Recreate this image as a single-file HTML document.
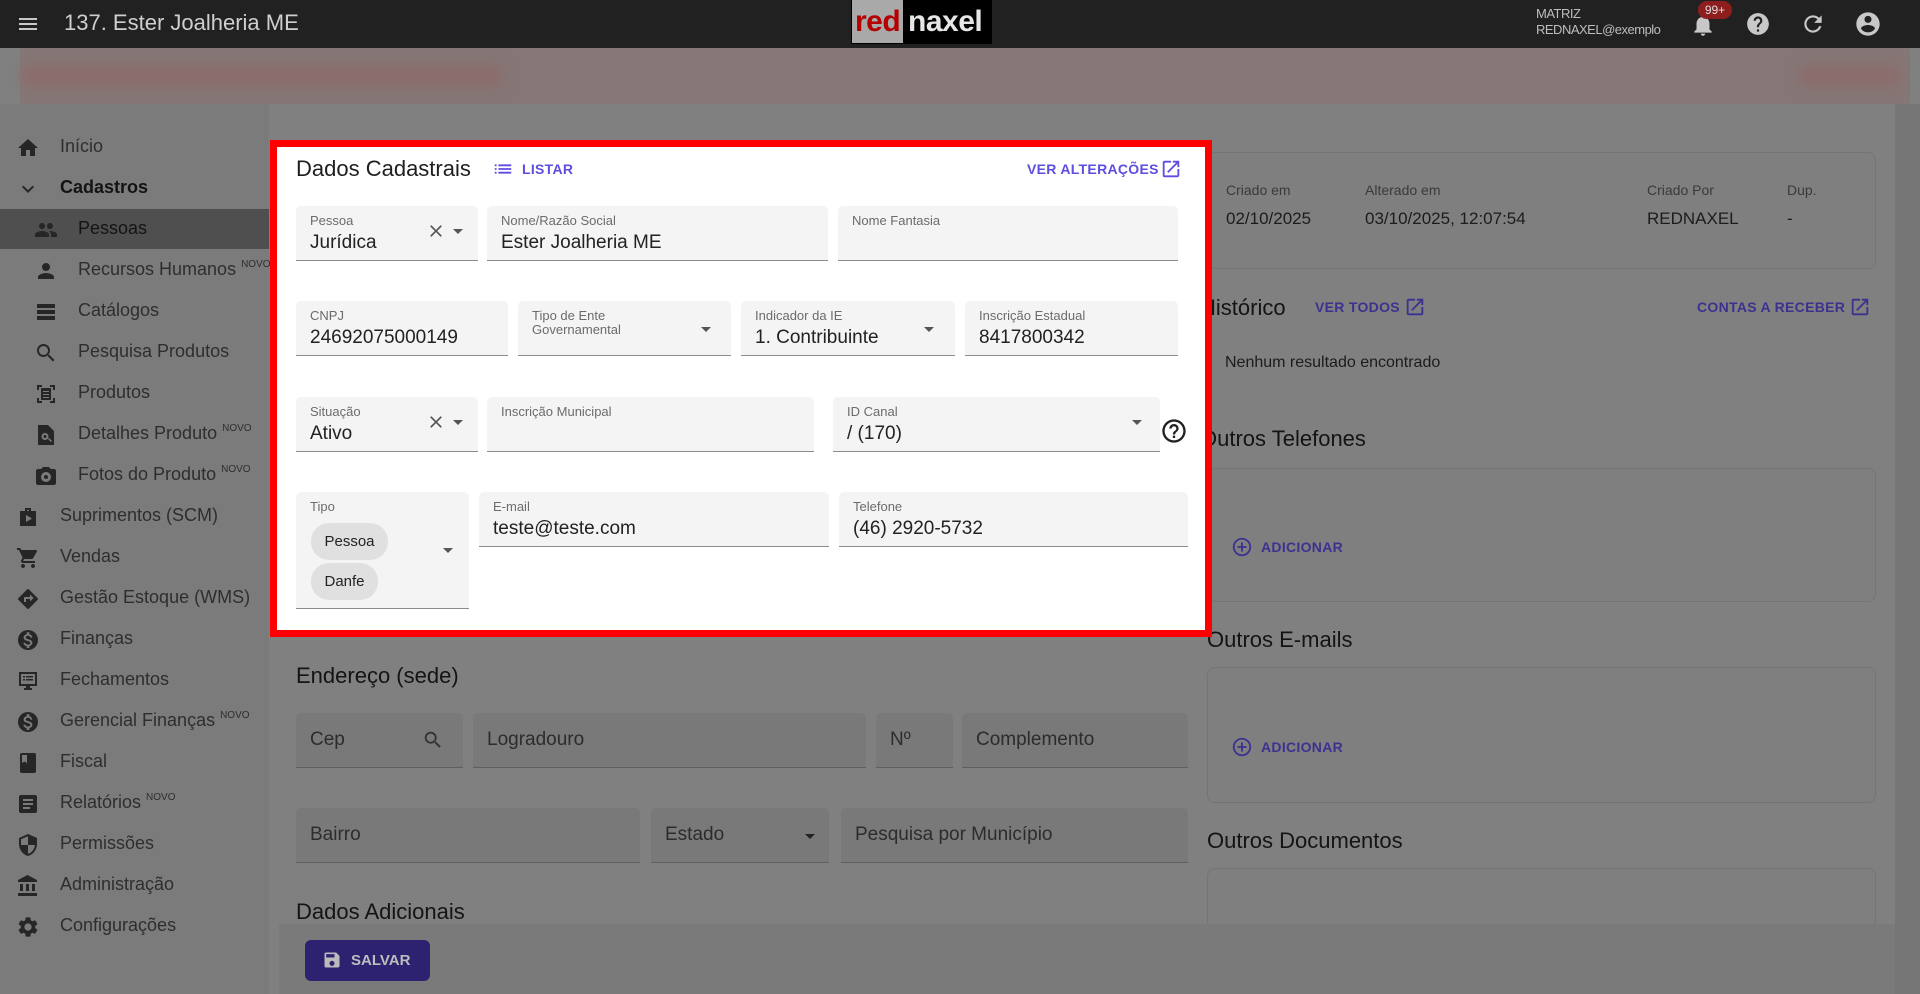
<!DOCTYPE html>
<html><head><meta charset="utf-8">
<style>
*{box-sizing:border-box;margin:0;padding:0}
body{width:1920px;height:994px;overflow:hidden;background:#808080;font-family:"Liberation Sans",Arial,sans-serif;position:relative;color:#1a1a1a}
.a{position:absolute}
svg{display:block}
.top{left:0;top:0;width:1920px;height:48px;background:#212121}
.side{left:0;top:104px;width:269px;height:890px;background:#7b7b7b}
.si{position:absolute;font-size:18px;color:#2e2e2e;white-space:nowrap}
.si svg{position:absolute;width:24px;height:24px;fill:#262626}
.si sup{font-size:10px;vertical-align:8px}
.f{position:absolute;background:#f4f4f4;border-bottom:1px solid #8c8c8c;border-radius:5px 5px 0 0}
.f .l{position:absolute;left:14px;top:8px;font-size:13px;color:#6b6b6b;line-height:14px}
.f .v{position:absolute;left:14px;top:26px;font-size:19px;color:#222}
.f .dd{position:absolute;width:24px;height:24px;fill:#555}
.g{position:absolute;background:#797979;border-bottom:1px solid #5e5e5e;border-radius:5px 5px 0 0}
.g .p{position:absolute;left:14px;top:16px;font-size:19px;color:#2c2c2c}
.h{position:absolute;font-size:22px;color:#141414}
.lk{position:absolute;font-size:14px;color:#3b3290;font-weight:bold;letter-spacing:.3px}
.card{position:absolute;border:1px solid #747474;border-radius:8px;background:#7f7f7f}
</style></head><body>

<div class="a top"></div>
<svg class="a" style="left:16px;top:12px" width="24" height="24" viewBox="0 0 24 24" fill="#c8c8c8"><path d="M3 18h18v-2H3v2zm0-5h18v-2H3v2zm0-7v2h18V6H3z"/></svg>
<div class="a" style="left:64px;top:10px;font-size:22px;color:#cfcfcf">137. Ester Joalheria ME</div>
<div class="a" style="left:851px;top:0;width:141px;height:44px;background:#000"></div>
<div class="a" style="left:852px;top:0;width:51px;height:43px;background:#a9a9a9"></div>
<div class="a" style="left:855px;top:5px;font-size:30px;font-weight:bold;color:#b40000;letter-spacing:-.5px">red</div>
<div class="a" style="left:908px;top:5px;font-size:30px;font-weight:bold;color:#e6e6e6;letter-spacing:-.5px">naxel</div>
<div class="a" style="left:1536px;top:6px;font-size:13px;color:#bdbdbd;line-height:16px;letter-spacing:-.5px">MATRIZ<br>REDNAXEL@exemplo</div>
<svg class="a" style="left:1690px;top:12px" width="26" height="26" viewBox="0 0 24 24" fill="#c8c8c8"><path d="M12 22c1.1 0 2-.9 2-2h-4c0 1.1.89 2 2 2zm6-6v-5c0-3.07-1.64-5.640-4.5-6.32V4c0-.83-.67-1.5-1.5-1.5s-1.5.67-1.5 1.5v.68C7.63 5.36 6 7.92 6 11v5l-2 2v1h16v-1l-2-2z"/></svg>
<div class="a" style="left:1698px;top:1px;width:34px;height:18px;border-radius:9px;background:#8e1d1d;color:#ddd;font-size:12px;text-align:center;line-height:18px">99+</div>
<svg class="a" style="left:1745px;top:11px" width="26" height="26" viewBox="0 0 24 24" fill="#c8c8c8"><path d="M12 2C6.48 2 2 6.48 2 12s4.48 10 10 10 10-4.48 10-10S17.52 2 12 2zm1 17h-2v-2h2v2zm2.07-7.75l-.9.92C13.45 12.9 13 13.5 13 15h-2v-.5c0-1.1.45-2.1 1.17-2.83l1.24-1.26c.37-.36.59-.86.59-1.41 0-1.1-.9-2-2-2s-2 .9-2 2H8c0-2.21 1.79-4 4-4s4 1.79 4 4c0 .88-.36 1.68-.93 2.25z"/></svg>
<svg class="a" style="left:1800px;top:11px" width="26" height="26" viewBox="0 0 24 24" fill="#c8c8c8"><path d="M17.65 6.35A7.958 7.958 0 0012 4c-4.42 0-7.99 3.58-7.99 8s3.57 8 7.99 8c3.73 0 6.84-2.55 7.73-6h-2.08A5.99 5.99 0 0112 18c-3.31 0-6-2.69-6-6s2.69-6 6-6c1.66 0 3.14.69 4.22 1.78L13 11h7V4l-2.35 2.35z"/></svg>
<svg class="a" style="left:1854px;top:10px" width="28" height="28" viewBox="0 0 24 24" fill="#c8c8c8"><path d="M12 2C6.48 2 2 6.48 2 12s4.48 10 10 10 10-4.48 10-10S17.52 2 12 2zm0 3c1.66 0 3 1.34 3 3s-1.34 3-3 3-3-1.34-3-3 1.34-3 3-3zm0 14.2a7.2 7.2 0 01-6-3.22c.03-1.99 4-3.08 6-3.08 1.99 0 5.97 1.09 6 3.08a7.2 7.2 0 01-6 3.22z"/></svg>

<!-- sidebar -->
<div class="a side"></div>
<!-- banner -->
<div class="a" style="left:20px;top:48px;width:1890px;height:56px;background:#857776"></div>
<div class="a" style="left:22px;top:66px;width:480px;height:20px;background:#8c6c6c;filter:blur(6px)"></div>
<div class="a" style="left:1800px;top:66px;width:100px;height:20px;background:#8c6c6c;filter:blur(6px)"></div>

<div class="a" style="left:0;top:209px;width:269px;height:40px;background:#4f4f4f"></div>
<div class="si" style="left:60px;top:136px"><svg style="left:-44px;top:0" viewBox="0 0 24 24"><path d="M10 20v-6h4v6h5v-8h3L12 3 2 12h3v8z"/></svg>Início</div>
<div class="si" style="left:60px;top:177px;font-weight:bold;color:#141414"><svg style="left:-44px;top:0" viewBox="0 0 24 24"><path d="M16.59 8.59L12 13.17 7.41 8.59 6 10l6 6 6-6z"/></svg>Cadastros</div>
<div class="si" style="left:78px;top:218px;color:#141414"><svg style="left:-44px;top:0" viewBox="0 0 24 24"><path d="M16 11c1.66 0 2.99-1.34 2.99-3S17.66 5 16 5c-1.66 0-3 1.34-3 3s1.34 3 3 3zm-8 0c1.66 0 2.99-1.34 2.99-3S9.66 5 8 5C6.34 5 5 6.34 5 8s1.34 3 3 3zm0 2c-2.33 0-7 1.17-7 3.5V19h14v-2.5c0-2.33-4.67-3.5-7-3.5zm8 0c-.29 0-.62.02-.97.05 1.16.84 1.97 1.97 1.97 3.45V19h6v-2.5c0-2.33-4.67-3.5-7-3.5z"/></svg>Pessoas</div>
<div class="si" style="left:78px;top:259px"><svg style="left:-44px;top:0" viewBox="0 0 24 24"><path d="M12 12c2.21 0 4-1.79 4-4s-1.79-4-4-4-4 1.79-4 4 1.79 4 4 4zm0 2c-2.67 0-8 1.34-8 4v2h16v-2c0-2.66-5.33-4-8-4z"/></svg>Recursos Humanos <sup>NOVO</sup></div>
<div class="si" style="left:78px;top:300px"><svg style="left:-44px;top:0" viewBox="0 0 24 24"><path d="M3 4h18v4H3zM3 10h18v4H3zM3 16h18v4H3z"/></svg>Catálogos</div>
<div class="si" style="left:78px;top:341px"><svg style="left:-44px;top:0" viewBox="0 0 24 24"><path d="M15.5 14h-.79l-.28-.27A6.47 6.47 0 0016 9.5 6.5 6.5 0 109.5 16c1.61 0 3.09-.59 4.23-1.57l.27.28v.79l5 4.99L20.49 19l-4.99-5zm-6 0C7.01 14 5 11.99 5 9.5S7.01 5 9.5 5 14 7.01 14 9.5 11.99 14 9.5 14z"/></svg>Pesquisa Produtos</div>
<div class="si" style="left:78px;top:382px"><svg style="left:-44px;top:0" viewBox="0 0 24 24"><path d="M3 3h5v2H5v3H3zM16 3h5v5h-2V5h-3zM3 16h2v3h3v2H3zM19 16h2v5h-5v-2h3zM7 6h10v12H7zM9 9v1h6V9zm0 3v1h6v-1zm0 3v1h6v-1z"/></svg>Produtos</div>
<div class="si" style="left:78px;top:423px"><svg style="left:-44px;top:0" viewBox="0 0 24 24"><path d="M6 2h8l6 6v14H4V2zm5 8a3.5 3.5 0 100 7 3.5 3.5 0 100-7zm0 2a1.5 1.5 0 110 3 1.5 1.5 0 010-3zm3 4l3 3 1-1-3-3z"/></svg>Detalhes Produto <sup>NOVO</sup></div>
<div class="si" style="left:78px;top:464px"><svg style="left:-44px;top:0" viewBox="0 0 24 24"><path d="M9 3L7.17 5H4c-1.1 0-2 .9-2 2v12c0 1.1.9 2 2 2h16c1.1 0 2-.9 2-2V7c0-1.1-.9-2-2-2h-3.17L15 3zm3 15a5 5 0 110-10 5 5 0 010 10zm0-3a2 2 0 100-4 2 2 0 000 4z"/></svg>Fotos do Produto <sup>NOVO</sup></div>
<div class="si" style="left:60px;top:505px"><svg style="left:-44px;top:0" viewBox="0 0 24 24"><path d="M9 3h6v3h5v15H4V6h5zm2 2v1h2V5zm-1 5v7l6-3.5z"/></svg>Suprimentos (SCM)</div>
<div class="si" style="left:60px;top:546px"><svg style="left:-44px;top:0" viewBox="0 0 24 24"><path d="M7 18c-1.1 0-1.99.9-1.99 2S5.9 22 7 22s2-.9 2-2-.9-2-2-2zM1 2v2h2l3.6 7.59-1.35 2.45c-.16.28-.25.61-.25.96 0 1.1.9 2 2 2h12v-2H7.42a.25.25 0 01-.25-.25l.03-.12.9-1.63h7.45c.75 0 1.41-.41 1.75-1.03l3.58-6.49A1 1 0 0020 4H5.21l-.94-2H1zm16 16c-1.1 0-1.99.9-1.99 2s.89 2 1.99 2 2-.9 2-2-.9-2-2-2z"/></svg>Vendas</div>
<div class="si" style="left:60px;top:587px"><svg style="left:-44px;top:0" viewBox="0 0 24 24"><path d="M21.71 11.29l-9-9a1 1 0 00-1.41 0l-9 9a1 1 0 000 1.41l9 9a1 1 0 001.41 0l9-9a1 1 0 000-1.41zM14 14.5V12h-4v3H8v-4c0-.55.45-1 1-1h5V7.5l3.5 3.5-3.5 3.5z"/></svg>Gestão Estoque (WMS)</div>
<div class="si" style="left:60px;top:628px"><svg style="left:-44px;top:0" viewBox="0 0 24 24"><path d="M12 2a10 10 0 100 20 10 10 0 000-20zm1.4 16.1V20h-2.7v-1.9c-1.7-.4-3.2-1.5-3.3-3.4h2c.1 1 .8 1.8 2.6 1.8 1.9 0 2.3-.9 2.3-1.5 0-.8-.4-1.5-2.6-2-2.4-.6-4.1-1.6-4.1-3.6 0-1.7 1.4-2.8 3.1-3.2V4.3h2.7v1.9c1.9.5 2.8 1.9 2.9 3.4h-2c-.1-1.1-.6-1.8-2.2-1.8-1.5 0-2.4.7-2.4 1.6 0 .8.6 1.3 2.6 1.8s4.1 1.3 4.1 3.7c0 1.7-1.3 2.7-3 3.2z"/></svg>Finanças</div>
<div class="si" style="left:60px;top:669px"><svg style="left:-44px;top:0" viewBox="0 0 24 24"><path d="M3 3h18v14h-7v2h2v2H8v-2h2v-2H3zm2 2v10h14V5zm2 2h2v1.5H7zm3 0h7v1.5h-7zM7 10h2v1.5H7zm3 0h7v1.5h-7z"/></svg>Fechamentos</div>
<div class="si" style="left:60px;top:710px"><svg style="left:-44px;top:0" viewBox="0 0 24 24"><path d="M12 2a10 10 0 100 20 10 10 0 000-20zm1.4 16.1V20h-2.7v-1.9c-1.7-.4-3.2-1.5-3.3-3.4h2c.1 1 .8 1.8 2.6 1.8 1.9 0 2.3-.9 2.3-1.5 0-.8-.4-1.5-2.6-2-2.4-.6-4.1-1.6-4.1-3.6 0-1.7 1.4-2.8 3.1-3.2V4.3h2.7v1.9c1.9.5 2.8 1.9 2.9 3.4h-2c-.1-1.1-.6-1.8-2.2-1.8-1.5 0-2.4.7-2.4 1.6 0 .8.6 1.3 2.6 1.8s4.1 1.3 4.1 3.7c0 1.7-1.3 2.7-3 3.2z"/></svg>Gerencial Finanças <sup>NOVO</sup></div>
<div class="si" style="left:60px;top:751px"><svg style="left:-44px;top:0" viewBox="0 0 24 24"><path d="M6 2h12a2 2 0 012 2v16a2 2 0 01-2 2H6a2 2 0 01-2-2V4a2 2 0 012-2zm0 2v8l2.5-1.5L11 12V4z"/></svg>Fiscal</div>
<div class="si" style="left:60px;top:792px"><svg style="left:-44px;top:0" viewBox="0 0 24 24"><path d="M19 3H5a2 2 0 00-2 2v14a2 2 0 002 2h14a2 2 0 002-2V5a2 2 0 00-2-2zm-5 14H7v-2h7v2zm3-4H7v-2h10v2zm0-4H7V7h10v2z"/></svg>Relatórios <sup>NOVO</sup></div>
<div class="si" style="left:60px;top:833px"><svg style="left:-44px;top:0" viewBox="0 0 24 24"><path d="M12 1L3 5v6c0 5.55 3.84 10.74 9 12 5.16-1.26 9-6.45 9-12V5l-9-4zm0 10.99h7c-.53 4.12-3.28 7.79-7 8.94V12H5V6.3l7-3.11v8.8z"/></svg>Permissões</div>
<div class="si" style="left:60px;top:874px"><svg style="left:-44px;top:0" viewBox="0 0 24 24"><path d="M4 10v7h3v-7H4zm6 0v7h3v-7h-3zM2 22h19v-3H2v3zm14-12v7h3v-7h-3zm-4.5-9L2 6v2h19V6l-9.5-5z"/></svg>Administração</div>
<div class="si" style="left:60px;top:915px"><svg style="left:-44px;top:0" viewBox="0 0 24 24"><path d="M19.14 12.94c.04-.3.06-.61.06-.94 0-.32-.02-.64-.07-.94l2.03-1.58a.49.49 0 00.12-.61l-1.92-3.32a.488.488 0 00-.59-.22l-2.39.96c-.5-.38-1.03-.7-1.62-.94l-.36-2.54a.484.484 0 00-.48-.41h-3.84c-.24 0-.43.17-.47.41l-.36 2.54c-.59.24-1.13.57-1.62.94l-2.39-.96c-.22-.08-.47 0-.59.22L2.74 8.87c-.12.21-.08.47.12.61l2.03 1.58c-.05.3-.09.63-.09.94s.02.64.07.94l-2.03 1.58a.49.49 0 00-.12.61l1.92 3.32c.12.22.37.29.59.22l2.39-.96c.5.38 1.03.7 1.62.94l.36 2.54c.05.24.24.41.48.41h3.84c.24 0 .44-.17.47-.41l.36-2.54c.59-.24 1.13-.56 1.62-.94l2.39.96c.22.08.47 0 .59-.22l1.92-3.32c.12-.22.07-.47-.12-.61l-2.01-1.58zM12 15.6c-1.98 0-3.6-1.62-3.6-3.6s1.62-3.6 3.6-3.6 3.6 1.62 3.6 3.6-1.62 3.6-3.6 3.6z"/></svg>Configurações</div>

<!-- main area -->
<div class="a" style="left:279px;top:130px;width:1605px;height:794px;background:#808080;border-radius:8px 8px 0 0"></div>
<div class="a" style="left:1895px;top:104px;width:25px;height:890px;background:#767676"></div>

<!-- right column -->
<div class="card" style="left:1207px;top:152px;width:669px;height:117px"></div>
<div class="a" style="left:1226px;top:182px;font-size:14px;color:#3a3a3a">Criado em</div>
<div class="a" style="left:1365px;top:182px;font-size:14px;color:#3a3a3a">Alterado em</div>
<div class="a" style="left:1647px;top:182px;font-size:14px;color:#3a3a3a">Criado Por</div>
<div class="a" style="left:1787px;top:182px;font-size:14px;color:#3a3a3a">Dup.</div>
<div class="a" style="left:1226px;top:209px;font-size:17px;color:#1c1c1c">02/10/2025</div>
<div class="a" style="left:1365px;top:209px;font-size:17px;color:#1c1c1c">03/10/2025, 12:07:54</div>
<div class="a" style="left:1647px;top:209px;font-size:17px;color:#1c1c1c">REDNAXEL</div>
<div class="a" style="left:1787px;top:209px;font-size:17px;color:#1c1c1c">-</div>
<div class="h" style="left:1200px;top:295px">Histórico</div>
<div class="lk" style="left:1315px;top:299px">VER TODOS</div>
<svg class="a" style="left:1404px;top:296px" width="22" height="22" viewBox="0 0 24 24" fill="#3b3290"><path d="M19 19H5V5h7V3H5a2 2 0 00-2 2v14a2 2 0 002 2h14c1.1 0 2-.9 2-2v-7h-2v7zM14 3v2h3.59l-9.83 9.83 1.41 1.41L19 6.41V10h2V3h-7z"/></svg>
<div class="lk" style="left:1697px;top:299px">CONTAS A RECEBER</div>
<svg class="a" style="left:1849px;top:296px" width="22" height="22" viewBox="0 0 24 24" fill="#3b3290"><path d="M19 19H5V5h7V3H5a2 2 0 00-2 2v14a2 2 0 002 2h14c1.1 0 2-.9 2-2v-7h-2v7zM14 3v2h3.59l-9.83 9.83 1.41 1.41L19 6.41V10h2V3h-7z"/></svg>
<div class="a" style="left:1225px;top:354px;font-size:16px;color:#1c1c1c">Nenhum resultado encontrado</div>
<div class="h" style="left:1200px;top:426px">Outros Telefones</div>
<div class="card" style="left:1207px;top:468px;width:669px;height:134px"></div>
<svg class="a" style="left:1231px;top:536px" width="22" height="22" viewBox="0 0 24 24" fill="#3b3290"><path d="M13 7h-2v4H7v2h4v4h2v-4h4v-2h-4V7zm-1-5C6.48 2 2 6.48 2 12s4.48 10 10 10 10-4.48 10-10S17.52 2 12 2zm0 18c-4.41 0-8-3.59-8-8s3.59-8 8-8 8 3.59 8 8-3.59 8-8 8z"/></svg>
<div class="lk" style="left:1261px;top:539px">ADICIONAR</div>
<div class="h" style="left:1207px;top:627px">Outros E-mails</div>
<div class="card" style="left:1207px;top:667px;width:669px;height:136px"></div>
<svg class="a" style="left:1231px;top:736px" width="22" height="22" viewBox="0 0 24 24" fill="#3b3290"><path d="M13 7h-2v4H7v2h4v4h2v-4h4v-2h-4V7zm-1-5C6.48 2 2 6.48 2 12s4.48 10 10 10 10-4.48 10-10S17.52 2 12 2zm0 18c-4.41 0-8-3.59-8-8s3.59-8 8-8 8 3.59 8 8-3.59 8-8 8z"/></svg>
<div class="lk" style="left:1261px;top:739px">ADICIONAR</div>
<div class="h" style="left:1207px;top:828px">Outros Documentos</div>
<div class="card" style="left:1207px;top:868px;width:669px;height:80px"></div>

<!-- left lower -->
<div class="h" style="left:296px;top:663px">Endereço (sede)</div>
<div class="g" style="left:296px;top:713px;width:167px;height:55px"><div class="p">Cep</div>
<svg class="a" style="left:126px;top:16px" width="22" height="22" viewBox="0 0 24 24" fill="#333"><path d="M15.5 14h-.79l-.28-.27A6.47 6.47 0 0016 9.5 6.5 6.5 0 109.5 16c1.61 0 3.09-.59 4.23-1.57l.27.28v.79l5 4.99L20.49 19l-4.99-5zm-6 0C7.01 14 5 11.99 5 9.5S7.01 5 9.5 5 14 7.01 14 9.5 11.99 14 9.5 14z"/></svg></div>
<div class="g" style="left:473px;top:713px;width:393px;height:55px"><div class="p">Logradouro</div></div>
<div class="g" style="left:876px;top:713px;width:77px;height:55px"><div class="p">Nº</div></div>
<div class="g" style="left:962px;top:713px;width:226px;height:55px"><div class="p">Complemento</div></div>
<div class="g" style="left:296px;top:808px;width:344px;height:55px"><div class="p">Bairro</div></div>
<div class="g" style="left:651px;top:808px;width:178px;height:55px"><div class="p">Estado</div>
<svg class="a" style="left:147px;top:16px" width="24" height="24" viewBox="0 0 24 24" fill="#222"><path d="M7 10l5 5 5-5z"/></svg></div>
<div class="g" style="left:841px;top:808px;width:347px;height:55px"><div class="p">Pesquisa por Município</div></div>
<div class="h" style="left:296px;top:899px">Dados Adicionais</div>

<!-- bottom bar -->
<div class="a" style="left:279px;top:924px;width:1616px;height:70px;background:#7a7a7a"></div>
<div class="a" style="left:305px;top:940px;width:125px;height:41px;background:#2d2270;border-radius:6px"></div>
<svg class="a" style="left:322px;top:950px" width="20" height="20" viewBox="0 0 24 24" fill="#bbb"><path d="M17 3H5a2 2 0 00-2 2v14a2 2 0 002 2h14c1.1 0 2-.9 2-2V7l-4-4zm-5 16c-1.66 0-3-1.34-3-3s1.34-3 3-3 3 1.34 3 3-1.34 3-3 3zm3-10H5V5h10v4z"/></svg>
<div class="a" style="left:351px;top:952px;font-size:15px;color:#bdbdbd;font-weight:bold">SALVAR</div>

<!-- highlighted box -->
<div class="a" style="left:270px;top:140px;width:942px;height:497px;background:#fff;border:7px solid #ff0000"></div>
<div class="a" style="left:296px;top:156px;font-size:22px;color:#1e1e1e">Dados Cadastrais</div>
<svg class="a" style="left:492px;top:158px" width="22" height="22" viewBox="0 0 24 24" fill="#5e4ee0"><path d="M3 13h2v-2H3v2zm0 4h2v-2H3v2zm0-8h2V7H3v2zm4 4h14v-2H7v2zm0 4h14v-2H7v2zM7 7v2h14V7H7z"/></svg>
<div class="lk" style="left:522px;top:161px;color:#5e4ee0">LISTAR</div>
<div class="lk" style="left:1027px;top:161px;color:#5e4ee0">VER ALTERAÇÕES</div>
<svg class="a" style="left:1160px;top:158px" width="22" height="22" viewBox="0 0 24 24" fill="#5e4ee0"><path d="M19 19H5V5h7V3H5a2 2 0 00-2 2v14a2 2 0 002 2h14c1.1 0 2-.9 2-2v-7h-2v7zM14 3v2h3.59l-9.83 9.83 1.41 1.41L19 6.41V10h2V3h-7z"/></svg>

<div class="f" style="left:296px;top:206px;width:182px;height:55px"><div class="l">Pessoa</div><div class="v">Jurídica</div>
<svg class="dd" style="left:130px;top:15px;width:20px;height:20px" viewBox="0 0 24 24"><path d="M19 6.41L17.59 5 12 10.59 6.41 5 5 6.41 10.59 12 5 17.59 6.41 19 12 13.41 17.59 19 19 17.59 13.41 12z"/></svg>
<svg class="dd" style="left:150px;top:13px" viewBox="0 0 24 24"><path d="M7 10l5 5 5-5z"/></svg></div>
<div class="f" style="left:487px;top:206px;width:341px;height:55px"><div class="l">Nome/Razão Social</div><div class="v">Ester Joalheria ME</div></div>
<div class="f" style="left:838px;top:206px;width:340px;height:55px"><div class="l">Nome Fantasia</div></div>

<div class="f" style="left:296px;top:301px;width:212px;height:55px"><div class="l">CNPJ</div><div class="v">24692075000149</div></div>
<div class="f" style="left:518px;top:301px;width:213px;height:55px"><div class="l">Tipo de Ente<br>Governamental</div>
<svg class="dd" style="left:176px;top:16px" viewBox="0 0 24 24"><path d="M7 10l5 5 5-5z"/></svg></div>
<div class="f" style="left:741px;top:301px;width:214px;height:55px"><div class="l">Indicador da IE</div><div class="v">1. Contribuinte</div>
<svg class="dd" style="left:176px;top:16px" viewBox="0 0 24 24"><path d="M7 10l5 5 5-5z"/></svg></div>
<div class="f" style="left:965px;top:301px;width:213px;height:55px"><div class="l">Inscrição Estadual</div><div class="v">8417800342</div></div>

<div class="f" style="left:296px;top:397px;width:182px;height:55px"><div class="l">Situação</div><div class="v">Ativo</div>
<svg class="dd" style="left:130px;top:15px;width:20px;height:20px" viewBox="0 0 24 24"><path d="M19 6.41L17.59 5 12 10.59 6.41 5 5 6.41 10.59 12 5 17.59 6.41 19 12 13.41 17.59 19 19 17.59 13.41 12z"/></svg>
<svg class="dd" style="left:150px;top:13px" viewBox="0 0 24 24"><path d="M7 10l5 5 5-5z"/></svg></div>
<div class="f" style="left:487px;top:397px;width:327px;height:55px"><div class="l">Inscrição Municipal</div></div>
<div class="f" style="left:833px;top:397px;width:327px;height:55px"><div class="l">ID Canal</div><div class="v">/ (170)</div>
<svg class="dd" style="left:292px;top:13px" viewBox="0 0 24 24"><path d="M7 10l5 5 5-5z"/></svg></div>
<svg class="a" style="left:1160px;top:417px" width="28" height="28" viewBox="0 0 24 24" fill="#222"><path d="M11 18h2v-2h-2v2zm1-16C6.48 2 2 6.48 2 12s4.48 10 10 10 10-4.48 10-10S17.52 2 12 2zm0 18c-4.41 0-8-3.59-8-8s3.59-8 8-8 8 3.59 8 8-3.59 8-8 8zm0-14c-2.21 0-4 1.79-4 4h2c0-1.1.9-2 2-2s2 .9 2 2c0 2-3 1.75-3 5h2c0-2.25 3-2.5 3-5 0-2.21-1.79-4-4-4z"/></svg>

<div class="f" style="left:296px;top:492px;width:173px;height:117px"><div class="l">Tipo</div>
<div class="a" style="left:15px;top:31px;width:77px;height:37px;border-radius:18px;background:#e0e0e0;font-size:15px;color:#222;text-align:center;line-height:37px">Pessoa</div>
<div class="a" style="left:15px;top:71px;width:67px;height:37px;border-radius:18px;background:#e0e0e0;font-size:15px;color:#222;text-align:center;line-height:37px">Danfe</div>
<svg class="dd" style="left:140px;top:46px" viewBox="0 0 24 24"><path d="M7 10l5 5 5-5z"/></svg></div>
<div class="f" style="left:479px;top:492px;width:350px;height:55px"><div class="l">E-mail</div><div class="v">teste@teste.com</div></div>
<div class="f" style="left:839px;top:492px;width:349px;height:55px"><div class="l">Telefone</div><div class="v">(46) 2920-5732</div></div>
</body></html>
